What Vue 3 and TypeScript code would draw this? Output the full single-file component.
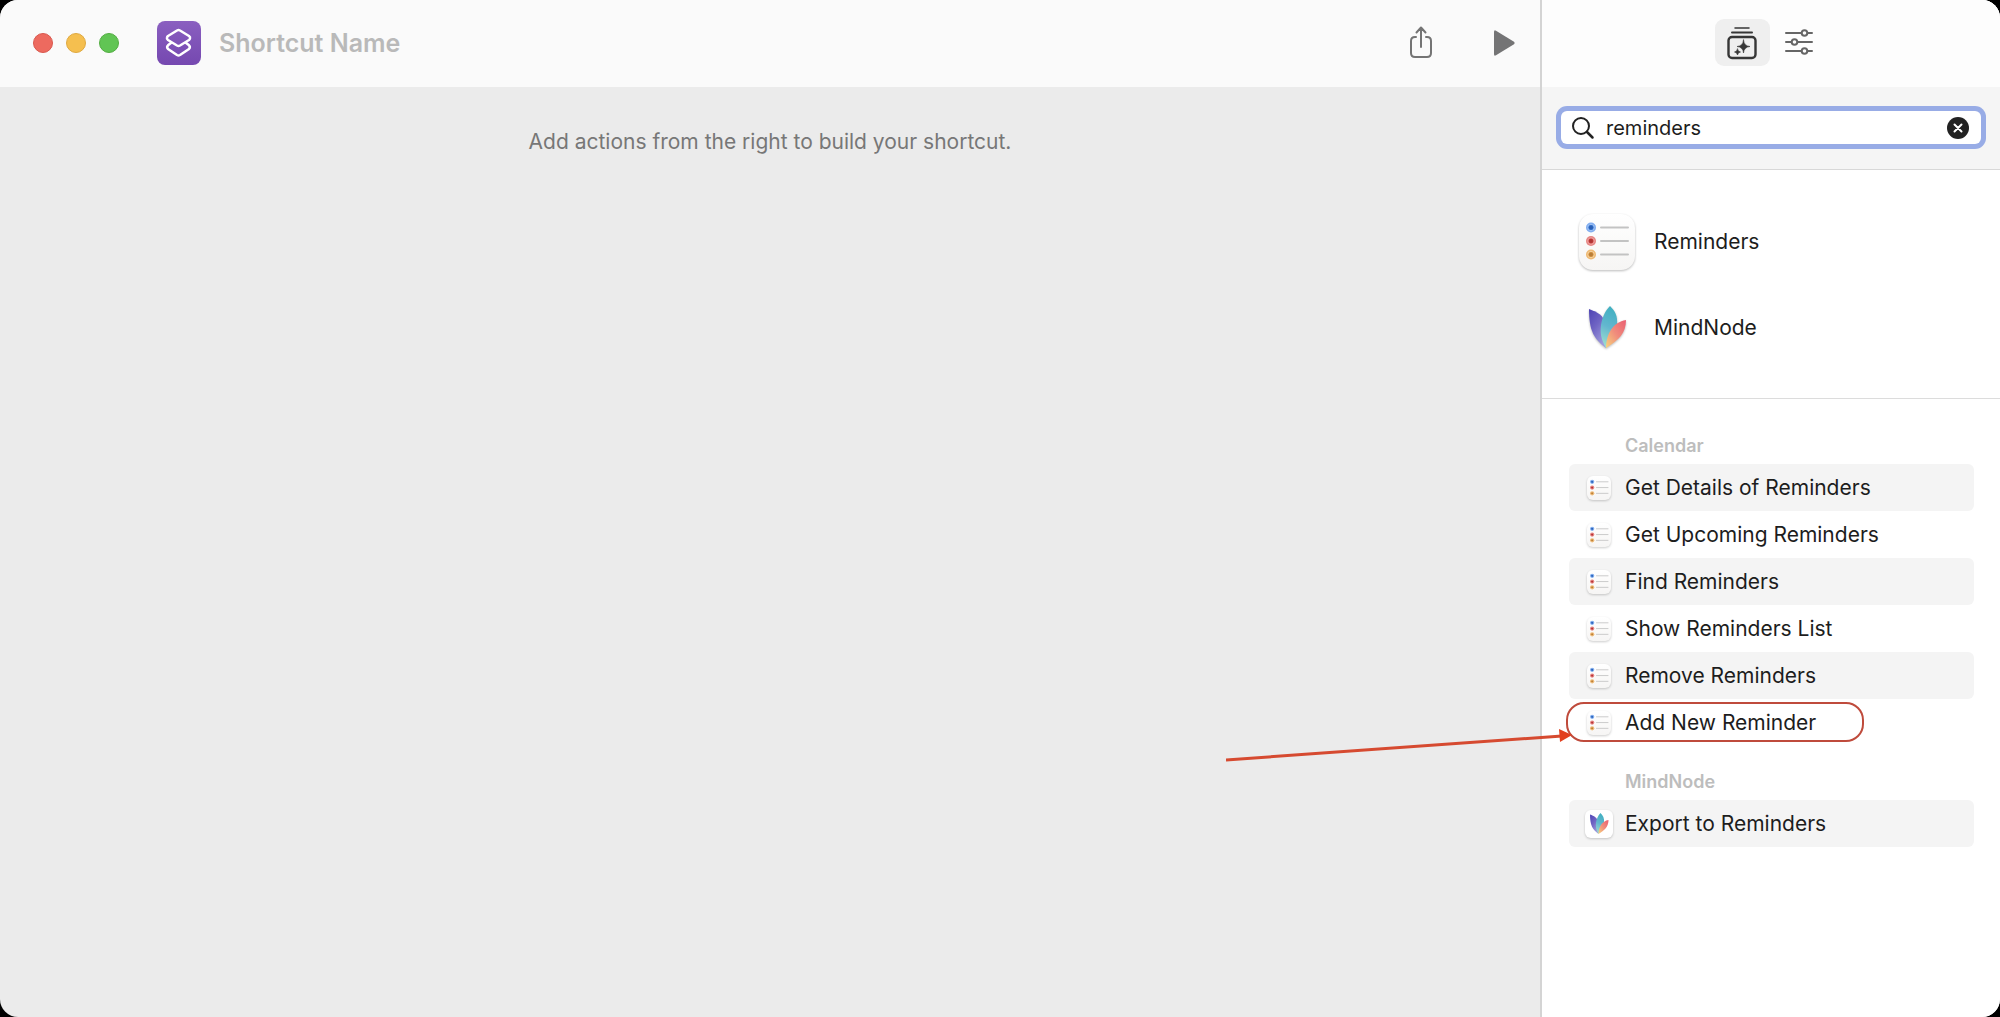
<script setup lang="ts">
import { ref } from 'vue'

interface Action {
  label: string
  highlighted?: boolean
}

interface ActionGroup {
  title: string
  icon: string
  actions: Action[]
}

const shortcutName = ref('')
const query = ref('reminders')

const apps = [
  { name: 'Reminders', icon: 'reminders' },
  { name: 'MindNode', icon: 'mindnode' },
]

const groups: ActionGroup[] = [
  {
    title: 'Calendar',
    icon: 'reminders',
    actions: [
      { label: 'Get Details of Reminders' },
      { label: 'Get Upcoming Reminders' },
      { label: 'Find Reminders' },
      { label: 'Show Reminders List' },
      { label: 'Remove Reminders' },
      { label: 'Add New Reminder', highlighted: true },
    ],
  },
  {
    title: 'MindNode',
    icon: 'mindnode',
    actions: [{ label: 'Export to Reminders' }],
  },
]
</script>

<template>
  <!-- Shared artwork for the app icons -->
  <svg class="sprite" aria-hidden="true">
    <defs>
      <linearGradient id="tile" x1="0" y1="0" x2="0" y2="1">
        <stop offset="0" stop-color="#ffffff" />
        <stop offset="1" stop-color="#f6f5f4" />
      </linearGradient>
      <linearGradient id="leafLeft" x1="0" y1="0" x2="0.6" y2="1">
        <stop offset="0" stop-color="#4d43b4" />
        <stop offset="0.5" stop-color="#7065c4" />
        <stop offset="1" stop-color="#9f9cdc" />
      </linearGradient>
      <linearGradient id="leafMiddle" x1="0.6" y1="0" x2="0.4" y2="1">
        <stop offset="0" stop-color="#3fb0c0" />
        <stop offset="0.5" stop-color="#62b6cf" />
        <stop offset="1" stop-color="#9ee0cf" />
      </linearGradient>
      <linearGradient id="leafRight" x1="1" y1="0" x2="0" y2="1">
        <stop offset="0" stop-color="#ea5f72" />
        <stop offset="0.5" stop-color="#f08c7c" />
        <stop offset="1" stop-color="#f8d47c" />
      </linearGradient>
    </defs>
    <symbol id="reminders" viewBox="0 0 56 56">
      <rect width="56" height="56" rx="14" fill="url(#tile)" />
      <path d="M22 13.500H49M22 27H49M22 40.500H49" stroke="#c3c3c3" stroke-width="2" stroke-linecap="round" />
      <circle cx="12" cy="13.500" r="5" fill="#82aef0" />
      <circle cx="12" cy="13.500" r="3.200" fill="#3d7ad6" stroke="#b4d0f6" stroke-width="0.800" />
      <circle cx="12" cy="13.500" r="2" fill="#2a5fb4" />
      <circle cx="12" cy="27" r="5" fill="#e68583" />
      <circle cx="12" cy="27" r="3.200" fill="#d34b49" stroke="#f4bcbb" stroke-width="0.800" />
      <circle cx="12" cy="27" r="2" fill="#b03434" />
      <circle cx="12" cy="40.500" r="5" fill="#efb972" />
      <circle cx="12" cy="40.500" r="3.200" fill="#dc9a47" stroke="#f8dcb4" stroke-width="0.800" />
      <circle cx="12" cy="40.500" r="2" fill="#b87d37" />
    </symbol>
    <symbol id="mindnode" viewBox="0 0 56 56">
      <path d="M10 9C18 12 25 15 26 24L27 48C15 39 10 31 10 9Z" fill="url(#leafLeft)" />
      <path d="M31 6C36 11 39 16 38 25C36 34 32 40 27 48C22 39 21 33 22 25C23 18 26 11 31 6Z" fill="url(#leafMiddle)" />
      <path d="M47 20C47 33 40 40 27 48C27 34 34 22 47 20Z" fill="url(#leafRight)" />
    </symbol>
  </svg>

  <div class="window">
    <main class="editor">
      <header class="toolbar">
        <div class="lights">
          <button class="light close" type="button" aria-label="Close"></button>
          <button class="light minimise" type="button" aria-label="Minimise"></button>
          <button class="light zoom" type="button" aria-label="Zoom"></button>
        </div>
        <button class="shortcut-icon" type="button" aria-label="Shortcut icon">
          <svg viewBox="0 0 44 44" width="44" height="44" fill="none" stroke="#fff" stroke-width="2.500" stroke-linejoin="round">
            <path d="M20 9.500Q21.500 8.700 23 9.500L32 15Q33.500 16.200 33 17.500Q32.800 18.300 32 19L23 24.500Q21.500 25.300 20 24.500L11 19Q9.500 17.800 10 16.500Q10.200 15.700 11 15Z" />
            <path d="M14.500 21.500L11 24.300Q9.300 26 11 28L20 34Q21.500 34.800 23 34L32 28Q33.700 26 32 24.300L28.500 21.500" />
          </svg>
        </button>
        <input v-model="shortcutName" class="name" type="text" placeholder="Shortcut Name" aria-label="Shortcut Name" />
        <button type="button" aria-label="Share">
          <svg viewBox="0 1 30 36" width="30" height="36" fill="none" stroke="#747474" stroke-width="2" stroke-linecap="round" stroke-linejoin="round">
            <path d="M10 13H9Q5 13 5 17V29Q5 33 9 33H21Q25 33 25 29V17Q25 13 21 13H20M15 23V4M10.500 8.500L15 3.500L19.500 8.500" />
          </svg>
        </button>
        <button class="run" type="button" aria-label="Run">
          <svg viewBox="0 0 24 30" width="24" height="30">
            <path d="M2 4V26Q2 28.500 4 27.300L22 16.200Q23.500 15 22 13.800L4 2.700Q2 1.500 2 4Z" fill="#747475" />
          </svg>
        </button>
      </header>
      <p class="hint">Add actions from the right to build your shortcut.</p>
    </main>

    <aside class="library">
      <header class="tabs">
        <button class="tab active" type="button" aria-label="Action library">
          <svg viewBox="0 0 34 36" width="34" height="36" fill="none" stroke="#363636" stroke-width="2" stroke-linecap="round">
            <path d="M10 3H24" stroke-width="1.500" />
            <path d="M7 7.500H27" />
            <rect x="3.500" y="12" width="27" height="21" rx="3.500" stroke-width="2.400" />
            <path d="M18.500 15Q19 21 25 21.500Q19 22 18.500 28Q18 22 12 21.500Q18 21 18.500 15ZM12.500 24Q12.800 26.500 15.500 27Q12.800 27.500 12.500 30Q12.200 27.500 9.500 27Q12.200 26.500 12.500 24Z" fill="#363636" stroke="#363636" stroke-width="0.600" />
          </svg>
        </button>
        <button class="tab" type="button" aria-label="Shortcut details">
          <svg viewBox="0 0 30 28" width="30" height="28" fill="none" stroke="#666" stroke-width="2" stroke-linecap="round">
            <path d="M2 4H17M24 4H28M2 13H7M14 13H28M2 22H17M24 22H28" />
            <circle cx="20.500" cy="4" r="2.800" /><circle cx="10.500" cy="13" r="2.800" /><circle cx="20.500" cy="22" r="2.800" />
          </svg>
        </button>
      </header>

      <div class="search-band">
        <label class="search">
          <svg viewBox="0 0 24 24" width="24" height="24" fill="none" stroke="#222" stroke-linecap="round" aria-hidden="true">
            <circle cx="10" cy="10" r="8" stroke-width="2" />
            <path d="M16 16L21.500 21.500" stroke-width="2.500" />
          </svg>
          <input v-model="query" type="text" aria-label="Search actions" />
          <button type="button" aria-label="Clear search" @click="query = ''">
            <svg viewBox="0 0 22 22" width="22" height="22">
              <circle cx="11" cy="11" r="11" fill="#222" />
              <path d="M7.500 7.500L14.500 14.500M14.500 7.500L7.500 14.500" stroke="#fff" stroke-width="2" stroke-linecap="round" />
            </svg>
          </button>
        </label>
      </div>

      <nav class="apps">
        <button v-for="app in apps" :key="app.name" class="app" type="button">
          <svg class="app-icon" aria-hidden="true"><use :href="`#${app.icon}`" /></svg>
          {{ app.name }}
        </button>
      </nav>

      <section v-for="group in groups" :key="group.title" class="group">
        <h2>{{ group.title }}</h2>
        <ul>
          <li v-for="action in group.actions" :key="action.label">
            <button class="action" type="button">
              <svg :class="['action-icon', group.icon]" aria-hidden="true"><use :href="`#${group.icon}`" /></svg>
              {{ action.label }}
            </button>
            <div v-if="action.highlighted" class="callout">
              <svg class="arrow" viewBox="0 0 348 44" aria-hidden="true">
                <path d="M0 34L336 10" stroke="#d64a30" stroke-width="3" />
                <path d="M333 3L346 9L334 16Z" fill="#e2401f" />
              </svg>
            </div>
          </li>
        </ul>
      </section>
    </aside>
  </div>
</template>

<style>
body {
  margin: 0;
  background: #000;
}
</style>

<style scoped>
.sprite {
  position: absolute;
  width: 0;
  height: 0;
}

.window {
  display: flex;
  min-height: 100vh;
  overflow: hidden;
  border-radius: 18px;
  background: #ebebeb;
  color: #1d1d1d;
  font-family: Inter, "Liberation Sans", sans-serif;
  font-size: 21px;
  line-height: 28px;
}

button {
  display: flex;
  align-items: center;
  flex: none;
  margin: 0;
  padding: 0;
  border: 0;
  background: none;
  color: inherit;
  font: inherit;
}

input {
  flex: 1;
  min-width: 0;
  padding: 0;
  border: 0;
  outline: 0;
  background: none;
  color: inherit;
  font: inherit;
}

svg {
  display: block;
}

.editor {
  flex: 1;
  min-width: 0;
}

.toolbar {
  display: flex;
  align-items: center;
  height: 87px;
  padding: 0 24px 2px 33px;
  box-sizing: border-box;
  background: #fafafa;
}

.lights {
  display: flex;
  gap: 13px;
}

.light {
  width: 20px;
  height: 20px;
  border: 1px solid #d9584e;
  border-radius: 50%;
  background: #ed6a5f;
}

.minimise {
  border-color: #dfa940;
  background: #f5bf4f;
}

.zoom {
  border-color: #53ad42;
  background: #61c554;
}

.shortcut-icon {
  margin: 0 18px 0 38px;
  border-radius: 8px;
  background: linear-gradient(#8a5fc0, #7548b0);
}

.name {
  height: 36px;
  font-size: 25px;
  font-weight: 600;
}

.name::placeholder {
  color: #b9b9b9;
  opacity: 1;
}

.run {
  margin-left: 56px;
}

.hint {
  margin: 41px 0 0;
  color: #777;
  text-align: center;
}

.library {
  flex: none;
  width: 23%;
  min-width: 440px;
  box-sizing: border-box;
  border-left: 2px solid #d4d4d4;
  background: #fff;
}

.tabs {
  display: flex;
  align-items: center;
  justify-content: center;
  gap: 14px;
  height: 87px;
  padding: 0 14px 2px 0;
  box-sizing: border-box;
  background: #fdfdfd;
}

.tab.active {
  justify-content: center;
  width: 55px;
  height: 47px;
  border-radius: 9px;
  background: #efefef;
}

.search-band {
  padding: 24px 19px 25px;
  border-bottom: 1px solid #d8d8d8;
  background: #f5f5f5;
}

.search {
  display: flex;
  align-items: center;
  gap: 11px;
  height: 33px;
  padding: 0 12px 0 10px;
  border-radius: 6px;
  background: #fff;
  box-shadow: 0 0 0 5px #98ace6;
  font-size: 20px;
}

.apps {
  display: flex;
  flex-direction: column;
  gap: 30px;
  padding: 44px 37px 42px;
  border-bottom: 1px solid #dcdcdc;
}

.app {
  gap: 19px;
}

.app-icon {
  width: 56px;
  height: 56px;
  filter: drop-shadow(0 1px 1px #0004);
}

.group {
  padding: 33px 26px 0 27px;
}

.group + .group {
  padding-top: 22px;
}

h2 {
  margin: 0 0 4px 56px;
  color: #bdbdbd;
  font-size: 18px;
  font-weight: 600;
  line-height: 28px;
}

ul {
  margin: 0;
  padding: 0;
  list-style: none;
}

li {
  position: relative;
}

.action {
  width: 100%;
  height: 47px;
  gap: 14px;
  padding-left: 18px;
  border-radius: 6px;
}

li:nth-child(odd) .action {
  background: #f4f4f4;
}

.action-icon {
  width: 24px;
  height: 24px;
  filter: drop-shadow(0 1px 1px #0003);
}

.action-icon.mindnode {
  width: 28px;
  height: 28px;
  margin: 0 -2px;
  border-radius: 6px;
  background: #fff;
}

.callout {
  position: absolute;
  top: 3px;
  left: -3px;
  width: 298px;
  height: 40px;
  box-sizing: border-box;
  border: 2px solid #bf4b3c;
  border-radius: 18px;
  pointer-events: none;
}

.arrow {
  position: absolute;
  right: 288px;
  bottom: -30px;
  width: 348px;
  height: 44px;
}
</style>
